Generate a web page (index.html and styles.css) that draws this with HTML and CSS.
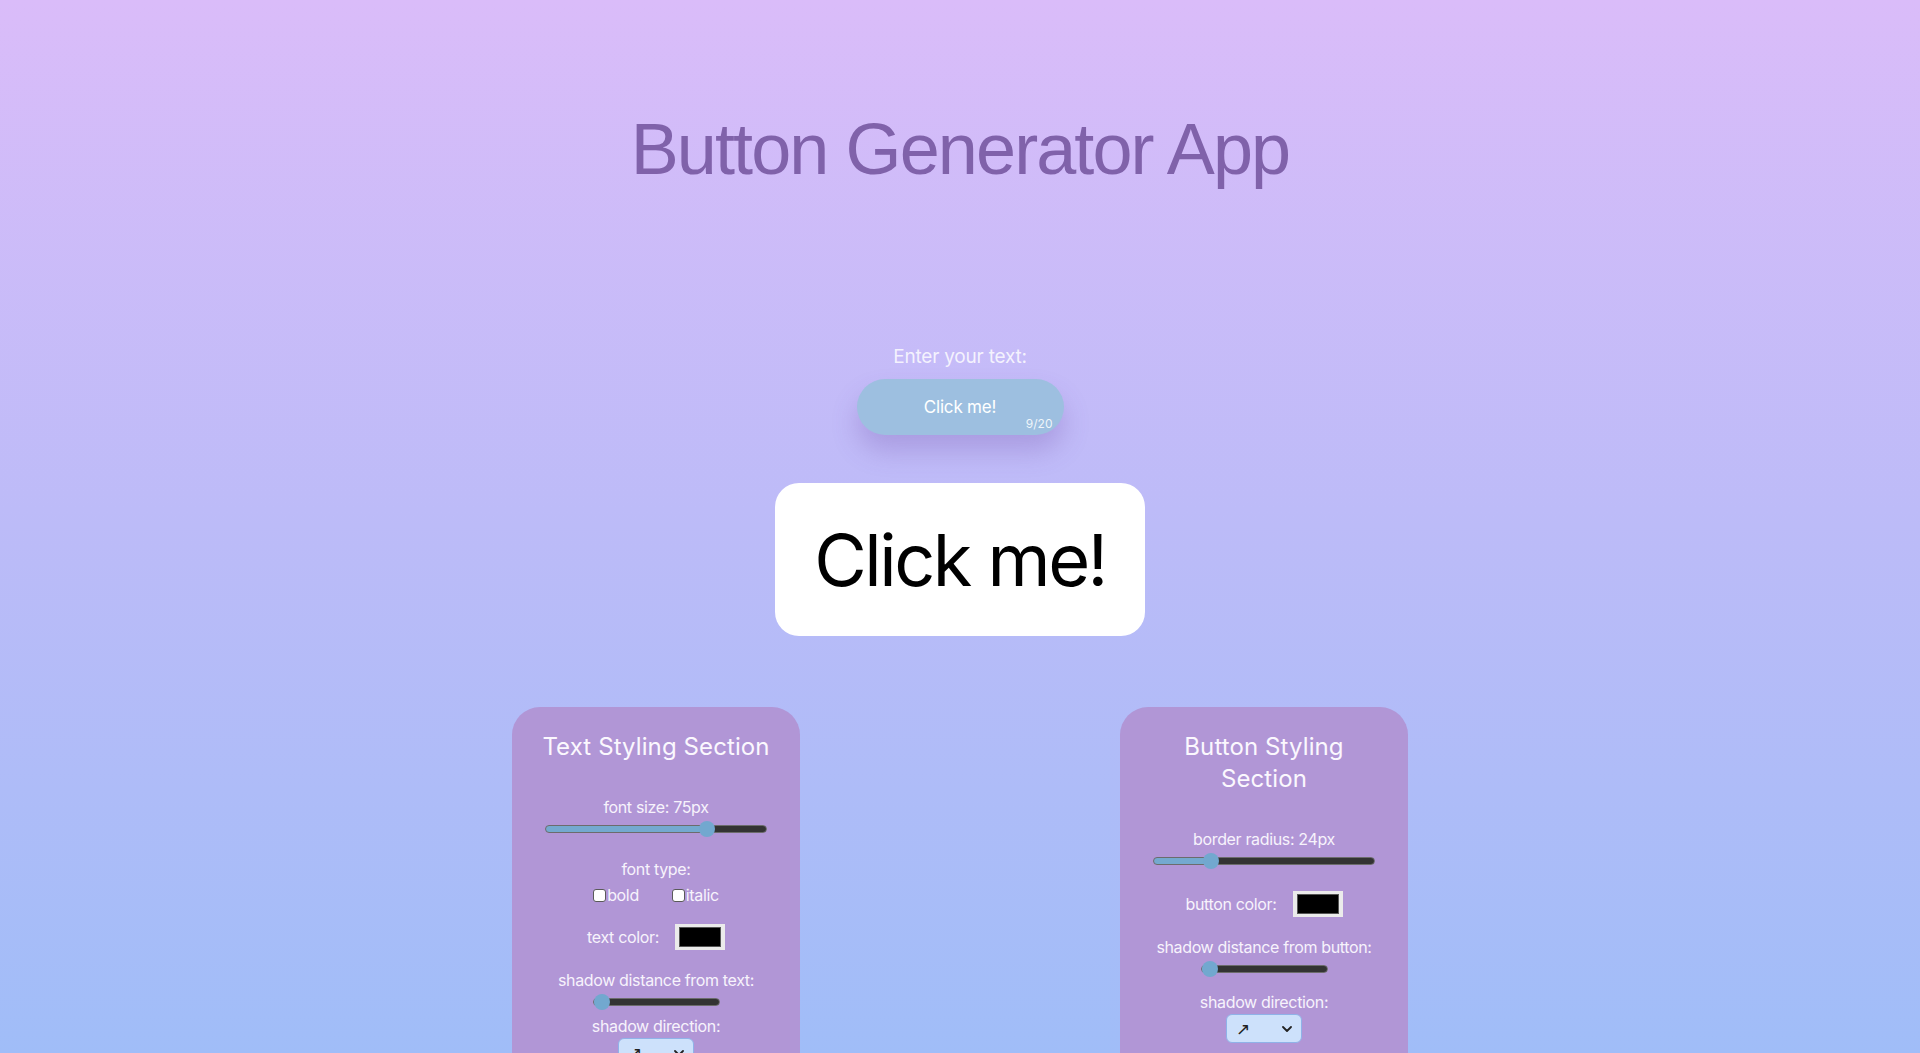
FILE: index.html
```html
<!DOCTYPE html>
<html lang="en">
<head>
<meta charset="utf-8">
<title>Button Generator App</title>
<link rel="stylesheet" href="styles.css">
</head>
<body>
<header class="header">
  <h1 class="title">Button Generator App</h1>
</header>
<main class="main">
  <section class="entry">
    <label class="entry-label" for="btn-text">Enter your text:</label>
    <div class="entry-field">
      <input class="entry-input" id="btn-text" type="text" value="Click me!" maxlength="20">
      <span class="entry-count">9/20</span>
    </div>
  </section>

  <div class="preview">
    <button class="preview-button" type="button">Click me!</button>
  </div>

  <div class="panels">
    <section class="panel">
      <h2 class="panel-title">Text Styling Section</h2>

      <div class="field field--first">
        <label class="field-label" for="font-size">font size: 75px</label>
        <input class="range range--wide" id="font-size" type="range" min="0" max="100" value="75" style="--v:0.75">
      </div>

      <div class="field field--after-range">
        <span class="field-label">font type:</span>
        <div class="checks">
          <label class="check"><input class="check-box" type="checkbox">bold</label>
          <label class="check"><input class="check-box" type="checkbox">italic</label>
        </div>
      </div>

      <div class="field field--row field--color-after-checks">
        <label class="field-label" for="text-color">text color:</label>
        <input class="swatch" id="text-color" type="color" value="#000000">
      </div>

      <div class="field">
        <label class="field-label" for="text-shadow">shadow distance from text:</label>
        <input class="range range--short" id="text-shadow" type="range" min="0" max="20" value="0" style="--v:0">
      </div>

      <div class="field field--tight">
        <label class="field-label" for="text-dir">shadow direction:</label>
        <div class="select-wrap">
          <select class="select" id="text-dir">
            <option>↗</option>
            <option>↘</option>
            <option>↙</option>
            <option>↖</option>
          </select>
          <svg class="select-chevron" viewBox="0 0 10 6" width="10" height="6" aria-hidden="true"><path d="M1 1l4 4 4-4" fill="none" stroke="#222" stroke-width="1.8" stroke-linecap="round" stroke-linejoin="round"/></svg>
        </div>
      </div>
    </section>

    <section class="panel">
      <h2 class="panel-title">Button Styling Section</h2>

      <div class="field field--first">
        <label class="field-label" for="radius">border radius: 24px</label>
        <input class="range range--wide" id="radius" type="range" min="0" max="100" value="24" style="--v:0.24">
      </div>

      <div class="field field--row field--after-range">
        <label class="field-label" for="btn-color">button color:</label>
        <input class="swatch" id="btn-color" type="color" value="#000000">
      </div>

      <div class="field">
        <label class="field-label" for="btn-shadow">shadow distance from button:</label>
        <input class="range range--short" id="btn-shadow" type="range" min="0" max="20" value="0" style="--v:0">
      </div>

      <div class="field field--snug">
        <label class="field-label" for="btn-dir">shadow direction:</label>
        <div class="select-wrap">
          <select class="select" id="btn-dir">
            <option>↗</option>
            <option>↘</option>
            <option>↙</option>
            <option>↖</option>
          </select>
          <svg class="select-chevron" viewBox="0 0 10 6" width="10" height="6" aria-hidden="true"><path d="M1 1l4 4 4-4" fill="none" stroke="#222" stroke-width="1.8" stroke-linecap="round" stroke-linejoin="round"/></svg>
        </div>
      </div>
    </section>
  </div>
</main>
</body>
</html>
```

FILE: styles.css
```css
* {
  box-sizing: border-box;
}

html {
  min-height: 100%;
  background: linear-gradient(180deg, #dabcf9 0%, #bcbbf8 50%, #a0bdf8 100%) fixed;
}

body {
  margin: 0;
  font-family: Inter, "Noto Sans", sans-serif;
  color: #f7f3fc;
}

.header {
  padding-top: 113px;
  text-align: center;
}

.title {
  margin: 0;
  font-family: "Liberation Sans", Arial, sans-serif;
  font-weight: 400;
  font-size: 72px;
  line-height: 72px;
  letter-spacing: -1.9px;
  color: #8062aa;
}

.main {
  display: flex;
  flex-direction: column;
  align-items: center;
  padding-top: 160px;
}

.entry {
  display: flex;
  flex-direction: column;
  align-items: center;
}

.entry-label {
  font-size: 19px;
  line-height: 24px;
  letter-spacing: -0.2px;
  color: rgba(255, 255, 255, 0.82);
}

.entry-field {
  position: relative;
  z-index: 1;
  margin-top: 10px;
  width: 207px;
  height: 56px;
}

.entry-input {
  display: block;
  width: 100%;
  height: 100%;
  border: none;
  border-radius: 28px;
  background: #9dbfe0;
  color: #fff;
  text-align: center;
  font-family: Inter, sans-serif;
  font-size: 17px;
  letter-spacing: -0.2px;
  outline: none;
  box-shadow: 0 16px 26px rgba(110, 80, 170, 0.28);
}

.entry-count {
  position: absolute;
  right: 11px;
  bottom: 5px;
  font-size: 12px;
  line-height: 12px;
  color: rgba(255, 255, 255, 0.85);
}

.preview {
  margin-top: 48px;
}

.preview-button {
  display: block;
  width: 370px;
  height: 153px;
  padding: 0;
  border: none;
  border-radius: 24px;
  background: #fff;
  color: #000;
  font-family: Inter, sans-serif;
  font-size: 72px;
  font-weight: 400;
  letter-spacing: -2.5px;
}

.panels {
  display: flex;
  gap: 320px;
  margin-top: 71px;
  align-items: flex-start;
}

.panel {
  width: 288px;
  padding: 24px 24px 48px;
  border-radius: 28px;
  background: #b196d6;
  display: flex;
  flex-direction: column;
  align-items: center;
  text-align: center;
}

.panel-title {
  margin: 0;
  font-size: 24px;
  line-height: 32px;
  font-weight: 400;
  letter-spacing: 0.1px;
  color: #fbf8fe;
}

.field {
  display: flex;
  flex-direction: column;
  align-items: center;
  margin-top: 20px;
}

.field--first {
  margin-top: 34px;
}

.field--after-range {
  margin-top: 26px;
}

.field--color-after-checks {
  margin-top: 19px;
}

.field--tight {
  margin-top: 10px;
}

.field--snug {
  margin-top: 19px;
}

.field--row {
  flex-direction: row;
  gap: 16px;
}

.field-label {
  font-size: 16px;
  line-height: 20px;
  letter-spacing: -0.35px;
}

.range {
  -webkit-appearance: none;
  appearance: none;
  display: block;
  height: 8px;
  margin: 8px 0 0;
  padding: 0;
  border: 1px solid #6c6c6c;
  border-radius: 4px;
  background: linear-gradient(90deg, #74a9cf calc(8px + (100% - 16px) * var(--v)), #333 0);
  outline: none;
}

.range::-webkit-slider-thumb {
  -webkit-appearance: none;
  appearance: none;
  width: 16px;
  height: 16px;
  border: none;
  border-radius: 50%;
  background: #72a8cf;
}

.range--wide {
  width: 222px;
}

.range--short {
  width: 127px;
}

.checks {
  display: flex;
  gap: 33px;
  margin-top: 6px;
}

.check {
  display: flex;
  align-items: center;
  font-size: 16px;
  line-height: 20px;
  letter-spacing: -0.35px;
}

.check-box {
  -webkit-appearance: none;
  appearance: none;
  width: 13px;
  height: 13px;
  margin: 0 1px 0 0;
  border: 1px solid #5a5a5a;
  border-radius: 3px;
  background: #fff;
}

.swatch {
  -webkit-appearance: none;
  appearance: none;
  width: 50px;
  height: 26px;
  padding: 3px 4px;
  border: none;
  background: #ebebeb;
}

.swatch::-webkit-color-swatch-wrapper {
  padding: 0;
}

.swatch::-webkit-color-swatch {
  border: 1px solid #555;
}

.select-wrap {
  position: relative;
  margin-top: 2px;
}

.select {
  -webkit-appearance: none;
  appearance: none;
  display: block;
  width: 76px;
  height: 29px;
  padding: 0 0 0 9px;
  border: 1px solid #8fb2e8;
  border-radius: 6px;
  background: #cde1fb;
  color: #222;
  font-family: "DejaVu Sans", sans-serif;
  font-size: 17px;
}

.select-chevron {
  position: absolute;
  right: 10px;
  top: 12px;
  pointer-events: none;
}
```
